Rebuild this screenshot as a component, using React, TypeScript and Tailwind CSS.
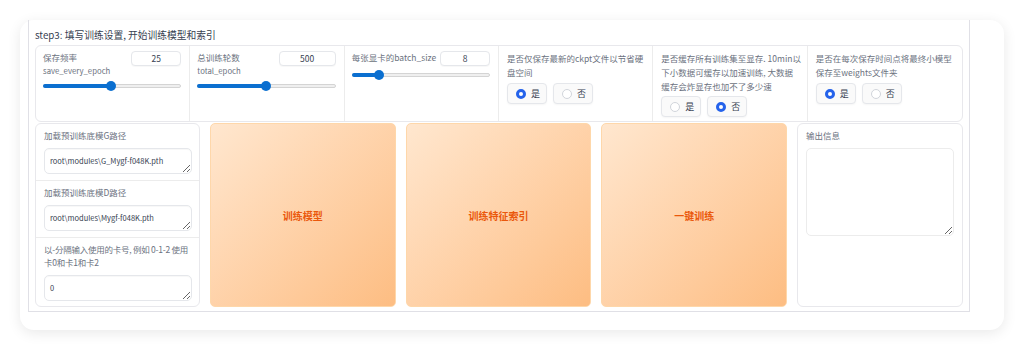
import React from 'react';

const font = { fontFamily: '"Noto Sans CJK SC", "Noto Sans", sans-serif' };

const NumberBox: React.FC<{ value: string; width: string }> = ({ value, width }) => (
    <div className={`${width} shrink-0 h-[15px] rounded-[4px] border border-[#e5e7eb] bg-white flex items-center justify-center text-[8.5px] text-[#374151] shadow-[0_1px_1px_rgba(0,0,0,0.03)]`}>
        {value}
    </div>
);

const Slider: React.FC<{ pct: number }> = ({ pct }) => (
    <div className="relative h-[10px] mt-[4px]">
        <div className="absolute left-0 right-0 top-[3px] h-[4px] rounded-full bg-[#efefef] border border-[#d4d4d4]" />
        <div className="absolute left-0 top-[3px] h-[4px] rounded-full bg-[#0b6fd0]" style={{ width: `${pct}%` }} />
        <div className="absolute top-0 w-[10px] h-[10px] rounded-full bg-[#0b6fd0] -ml-[5px]" style={{ left: `${pct}%` }} />
    </div>
);

const Radio: React.FC<{ label: string; checked?: boolean }> = ({ label, checked }) => (
    <div className="w-[40px] h-[21px] rounded-[4px] border border-[#e5e7eb] bg-[#fafafa] shadow-[0_1px_2px_rgba(0,0,0,0.04)] flex items-center pl-[8px] gap-[5px]">
        {checked ? (
            <span className="w-[10px] h-[10px] rounded-full border-[3px] border-[#2563eb] bg-white" />
        ) : (
            <span className="w-[10px] h-[10px] rounded-full border border-[#d1d5db] bg-white" />
        )}
        <span className="text-[9px] text-[#374151] leading-none">{label}</span>
    </div>
);

const RadioGroup: React.FC<{ lines: string[]; yes: boolean; mt: string }> = ({ lines, yes, mt }) => (
    <div className="pl-[8px] pr-[4px] pt-[5px] overflow-hidden">
        <div className="text-[8.5px] leading-[14px] text-[#6b7280] whitespace-nowrap">
            {lines.map((l) => (
                <p key={l}>{l}</p>
            ))}
        </div>
        <div className={`flex gap-[6px] ${mt}`}>
            <Radio label="是" checked={yes} />
            <Radio label="否" checked={!yes} />
        </div>
    </div>
);

const TextBlock: React.FC<{ label: string; value: string; last?: boolean; tight?: boolean }> = ({ label, value, last, tight }) => (
    <div className={`pl-[8px] pr-[7px] pt-[5px] pb-[6px] ${last ? '' : 'border-b border-[#ececec]'}`}>
        <p className={`text-[8.5px] leading-[13px] text-[#6b7280] mb-[6px] ${tight ? 'tracking-[-0.25px]' : ''}`}>{label}</p>
        <textarea
            readOnly
            value={value}
            className="block w-full h-[26px] rounded-[5px] border border-[#e5e7eb] bg-white px-[5px] py-[5px] text-[7.5px] leading-[13px] text-[#374151] outline-none overflow-hidden shadow-[inset_0_1px_1px_rgba(0,0,0,0.03)]"
        />
    </div>
);

const ActionButton: React.FC<{ label: string }> = ({ label }) => (
    <button className="flex-1 rounded-[5px] border border-[#fed7aa] bg-gradient-to-br from-[#ffe7cf] to-[#fdbd82] text-[10px] font-bold text-[#ea580c] flex items-center justify-center">
        {label}
    </button>
);

export default function App() {
    return (
        <div className="w-[1024px] h-[349px] bg-white pt-[20px] pl-[20px]" style={font}>
            <div className="w-[984px] h-[310px] rounded-[14px] bg-white shadow-[0_3px_14px_rgba(0,0,0,0.09)] pl-[8px]">
                <div className="w-[942px] h-[292px] border-x border-b border-[#e0e0e6] px-[6px] pt-[9px]">
                    <h2 className="text-[9.75px] leading-[12px] text-[#374151] mb-[4px]">step3: 填写训练设置, 开始训练模型和索引</h2>

                    <div className="grid grid-cols-6 h-[77px] rounded-[6px] border border-[#e8e8ec] divide-x divide-[#ececec]">
                        <div className="pl-[7px] pr-[8px] pt-[5px]">
                            <div className="flex justify-between">
                                <div className="text-[8.5px] leading-[13px] text-[#6b7280]">
                                    <p>保存频率</p>
                                    <p className="text-[7.75px]">save_every_epoch</p>
                                </div>
                                <NumberBox value="25" width="w-[50px]" />
                            </div>
                            <Slider pct={49} />
                        </div>
                        <div className="pl-[7px] pr-[8px] pt-[5px]">
                            <div className="flex justify-between">
                                <div className="text-[8.5px] leading-[13px] text-[#6b7280]">
                                    <p>总训练轮数</p>
                                    <p className="text-[7.75px]">total_epoch</p>
                                </div>
                                <NumberBox value="500" width="w-[57px]" />
                            </div>
                            <Slider pct={50} />
                        </div>
                        <div className="pl-[7px] pr-[8px] pt-[5px]">
                            <div className="flex justify-between">
                                <p className="text-[8.5px] leading-[13px] text-[#6b7280] whitespace-nowrap">每张显卡的batch_size</p>
                                <NumberBox value="8" width="w-[50px]" />
                            </div>
                            <Slider pct={20} />
                        </div>
                        <RadioGroup lines={['是否仅保存最新的ckpt文件以节省硬', '盘空间']} yes={true} mt="mt-[4px]" />
                        <RadioGroup lines={['是否缓存所有训练集至显存. 10min以', '下小数据可缓存以加速训练, 大数据', '缓存会炸显存也加不了多少速']} yes={false} mt="mt-[3px]" />
                        <RadioGroup lines={['是否在每次保存时间点将最终小模型', '保存至weights文件夹']} yes={true} mt="mt-[4px]" />
                    </div>

                    <div className="flex gap-[10px] mt-[1px] h-[184px]">
                        <div className="w-[165px] rounded-[6px] border border-[#e8e8ec]">
                            <TextBlock label="加载预训练底模G路径" value="root\modules\G_Mygf-f048K.pth" />
                            <TextBlock label="加载预训练底模D路径" value="root\modules\Mygf-f048K.pth" />
                            <TextBlock label="以-分隔输入使用的卡号, 例如 0-1-2 使用卡0和卡1和卡2" value="0" last tight />
                        </div>
                        <ActionButton label="训练模型" />
                        <ActionButton label="训练特征索引" />
                        <ActionButton label="一键训练" />
                        <div className="w-[166px] rounded-[6px] border border-[#e8e8ec] px-[8px] pt-[5px]">
                            <p className="text-[8.5px] leading-[13px] text-[#6b7280] mb-[6px]">输出信息</p>
                            <textarea
                                readOnly
                                className="block w-full h-[88px] rounded-[5px] border border-[#ececec] bg-white outline-none"
                            />
                        </div>
                    </div>
                </div>
            </div>
        </div>
    );
}
